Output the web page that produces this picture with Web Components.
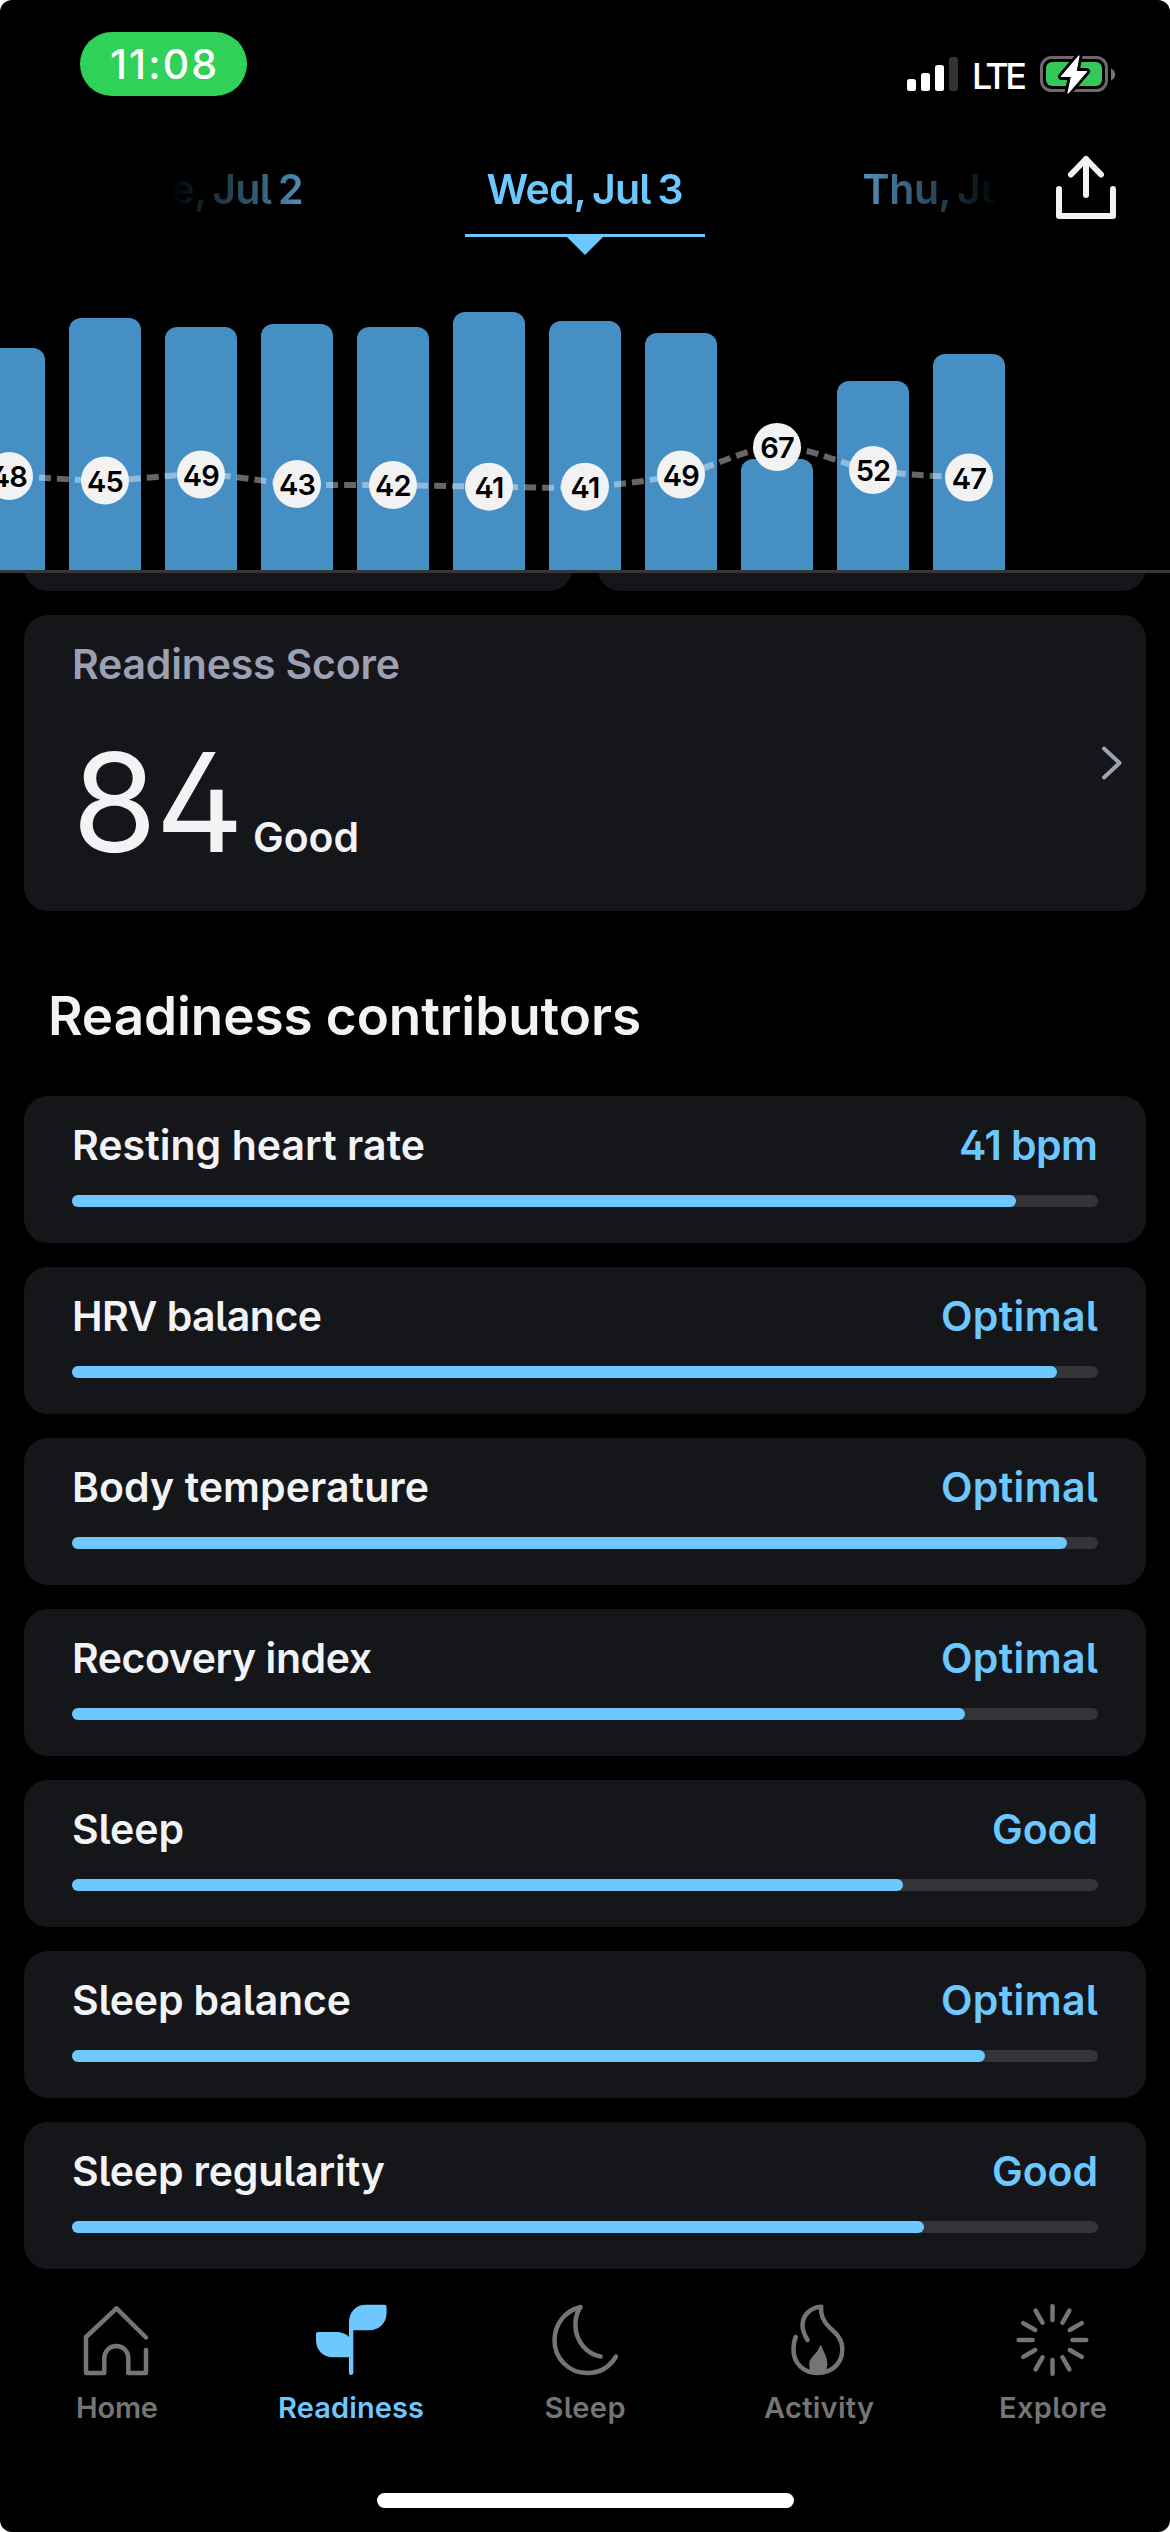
<!DOCTYPE html>
<html lang="en">
<head>
<meta charset="utf-8">
<title>Readiness</title>
<style>
  html, body {
    margin: 0;
    background: #fff;
  }

  body {
    --accent: #6dc8ff;
    --bar: #458fc5;
    --card: #15161a;
    --track: #333438;
    --text: #f2f3f5;
    --muted: #9d9fb3;
    --idle: #757575;
    font-family: Inter, "Liberation Sans", sans-serif;
    font-feature-settings: "cv02", "cv05";
    font-weight: 600;
    color: var(--text);
  }
</style>
</head>
<body>

<readiness-app>
  <status-bar slot="header" data-time="11:08" data-network="LTE"></status-bar>
  <date-strip slot="header">
    <date-tab data-width="181">Tue, Jul 2</date-tab>
    <date-tab data-width="197" selected>Wed, Jul 3</date-tab>
    <date-tab data-width="189">Thu, Jul 4</date-tab>
  </date-strip>
  <trend-chart slot="header"
               data-bars="222,252,243,246,243,258,249,237,111,189,216"
               data-values="48,45,49,43,42,41,41,49,67,52,47"
               data-points="476,480.5,474.5,484,485,486.7,486.7,474.5,447,470,477.5"></trend-chart>

  <card-stubs></card-stubs>
  <score-card data-score="84" data-rating="Good">Readiness Score</score-card>
  <section-title>Readiness contributors</section-title>
  <contributor-card data-width="353" data-value="41 bpm" data-value-width="139" data-fill="944">Resting heart rate</contributor-card>
  <contributor-card data-width="250" data-value="Optimal" data-value-width="157" data-fill="985">HRV balance</contributor-card>
  <contributor-card data-width="357" data-value="Optimal" data-value-width="157" data-fill="995">Body temperature</contributor-card>
  <contributor-card data-width="300" data-value="Optimal" data-value-width="157" data-fill="893">Recovery index</contributor-card>
  <contributor-card data-width="112" data-value="Good" data-value-width="106" data-fill="831">Sleep</contributor-card>
  <contributor-card data-width="279" data-value="Optimal" data-value-width="157" data-fill="913">Sleep balance</contributor-card>
  <contributor-card data-width="313" data-value="Good" data-value-width="106" data-fill="852">Sleep regularity</contributor-card>

  <tab-bar slot="footer">
    <tab-item data-icon="home" data-width="82">Home</tab-item>
    <tab-item data-icon="readiness" data-width="146" selected>Readiness</tab-item>
    <tab-item data-icon="sleep" data-width="81">Sleep</tab-item>
    <tab-item data-icon="activity" data-width="110">Activity</tab-item>
    <tab-item data-icon="explore" data-width="108">Explore</tab-item>
  </tab-bar>
</readiness-app>

<script>
// Attach an open shadow root and fill it
function render(host, css, html) {
  const shadow = host.attachShadow({ mode: "open" });
  shadow.innerHTML = `<style>${css}</style>${html}`;
  return shadow;
}

// <fit-text data-width="120">Label</fit-text>
// Tracks its text so that the label is data-width pixels wide
class FitText extends HTMLElement {
  connectedCallback() {
    const shadow = render(this, `
      :host { display: inline-block; white-space: nowrap; }
      span { display: inline-block; }
    `, `<span><slot></slot></span>`);

    const span = shadow.querySelector("span");
    const width = Number(this.dataset.width);
    const gaps = this.textContent.length - 1;
    if (width && gaps > 0) {
      const spacing = (width - span.getBoundingClientRect().width) / gaps;
      span.style.letterSpacing = `${spacing}px`;
      span.style.marginRight = `${-spacing}px`;
    }
  }
}

class ReadinessApp extends HTMLElement {
  constructor() {
    super();
    render(this, `
      :host {
        display: flex;
        flex-direction: column;
        width: 1170px;
        height: 2532px;
        background: #000;
        border-radius: 12px;
        overflow: hidden;
      }
      header { flex: none; }
      main {
        flex: none;
        height: 1696px;
        padding: 0 24px;
        display: flex;
        flex-direction: column;
        gap: 24px;
      }
      footer { flex: 1; }
    `, `
      <header><slot name="header"></slot></header>
      <main><slot></slot></main>
      <footer><slot name="footer"></slot></footer>
    `);
  }
}

class StatusBar extends HTMLElement {
  connectedCallback() {
    render(this, `
      :host {
        display: flex;
        justify-content: space-between;
        align-items: flex-start;
        height: 112px;
        padding: 32px 54px 0 80px;
        box-sizing: border-box;
        color: #fff;
        font-weight: 500;
        font-feature-settings: normal;
      }
      .time {
        width: 167px;
        height: 64px;
        line-height: 65px;
        border-radius: 32px;
        background: #30d158;
        text-align: center;
        font-size: 41px;
      }
      .right {
        display: flex;
        align-items: center;
        height: 84px;
      }
      .network {
        font-size: 36px;
        line-height: 40px;
        margin: 4px 13px 0 14px;
      }
      svg { display: block; }
    `, `
      <div class="time"><fit-text data-width="107">${this.dataset.time}</fit-text></div>
      <div class="right">
        <svg width="51" height="36" viewBox="0 0 51 36" fill="#fff">
          <rect x="0" y="23" width="9" height="12" rx="2.5"/>
          <rect x="14" y="17" width="9" height="18" rx="2.5"/>
          <rect x="28" y="9" width="9" height="26" rx="2.5"/>
          <rect x="42" y="1" width="9" height="34" rx="2.5" fill="#333"/>
        </svg>
        <div class="network"><fit-text data-width="55">${this.dataset.network}</fit-text></div>
        <svg width="76" height="40" viewBox="0 0 76 40">
          <rect x="1.5" y="3.5" width="65" height="33" rx="10" fill="none" stroke="#6d696d" stroke-width="3"/>
          <rect x="6" y="8" width="56" height="24" rx="6" fill="#34c759"/>
          <path d="M71 14.5 C76.5 17 76.5 24 71 26.5 Z" fill="#77737a"/>
          <path d="M39 2 L21.5 22.5 H31.5 L28 39 L46.5 17.5 H36 Z" fill="#fff" stroke="#000" stroke-width="7" stroke-linejoin="round" paint-order="stroke"/>
          <path d="M39 2 L21.5 22.5 H31.5 L28 39 L46.5 17.5 H36 Z" fill="#fff" stroke="#fff" stroke-width="1.2" stroke-linejoin="round"/>
        </svg>
      </div>
    `);
  }
}

class DateStrip extends HTMLElement {
  constructor() {
    super();
    render(this, `
      :host {
        display: flex;
        align-items: flex-start;
        height: 143px;
        padding-left: 170px;
        box-sizing: border-box;
      }
      .days {
        display: flex;
        justify-content: center;
        gap: 132px;
        width: 830px;
        padding-top: 52px;
        overflow: hidden;
        -webkit-mask-image: linear-gradient(90deg, transparent, #000 185px, #000 645px, transparent);
        mask-image: linear-gradient(90deg, transparent, #000 185px, #000 645px, transparent);
      }
      svg { margin: 41px 0 0 53px; }
    `, `
      <div class="days"><slot></slot></div>
      <svg width="66" height="69" viewBox="0 0 66 69" fill="none" stroke="#f2f3f5"
           stroke-width="6" stroke-linecap="round" stroke-linejoin="round">
        <path d="M6 36 V63 H60 V36"/>
        <path d="M33 42 V6 M18 21.5 L33 6 L48 21.5"/>
      </svg>
    `);
  }
}

class DateTab extends HTMLElement {
  connectedCallback() {
    render(this, `
      :host {
        flex: none;
        display: flex;
        flex-direction: column;
        align-items: center;
        width: 240px;
        color: var(--accent);
        font-size: 41px;
        line-height: 50px;
        word-spacing: -3px;
      }
      .marker {
        display: none;
        width: 240px;
        height: 21px;
        margin-top: 20px;
        background: var(--accent);
        clip-path: polygon(0 0, 100% 0, 100% 3px, 138px 3px, 120px 100%, 102px 3px, 0 3px);
      }
      :host([selected]) .marker { display: block; }
    `, `
      <fit-text data-width="${this.dataset.width}">${this.textContent}</fit-text>
      <div class="marker"></div>
    `);
  }
}

class TrendChart extends HTMLElement {
  connectedCallback() {
    const list = (name) => this.dataset[name].split(",").map(Number);
    const values = list("values");
    const top = 255;
    const points = list("points").map((y, i) => [9 + i * 96, y - top]);

    // Smooth line through the points
    let d = `M${points[0]}`;
    for (let i = 1; i < points.length; i++) {
      const [x0, y0] = points[i - 1];
      const [x1, y1] = points[i];
      const before = points[Math.max(i - 2, 0)];
      const after = points[Math.min(i + 1, points.length - 1)];
      d += ` C${x0 + 32} ${y0 + (y1 - before[1]) / 6} ${x1 - 32} ${y1 - (after[1] - y0) / 6} ${x1} ${y1}`;
    }

    const bars = list("bars").map((h) => `<div class="bar" style="height: ${h}px"></div>`).join("");
    const dots = points.map(([x, y], i) => `
      <circle cx="${x}" cy="${y}" r="24"/>
      <text x="${x}" y="${y + 11}">${values[i]}</text>`).join("");

    render(this, `
      :host {
        display: flex;
        align-items: flex-end;
        gap: 24px;
        height: 315px;
        border-bottom: 3px solid #37373b;
        position: relative;
        overflow: hidden;
      }
      .bar {
        flex: none;
        width: 72px;
        border-radius: 12px 12px 0 0;
        background: var(--bar);
      }
      .bar:first-of-type { margin-left: -27px; }
      svg { position: absolute; left: 0; top: 0; }
      .line {
        fill: none;
        stroke: rgba(255, 255, 255, 0.4);
        stroke-width: 6;
        stroke-dasharray: 12 6;
        stroke-dashoffset: -12;
      }
      circle { fill: #f2f2f3; }
      text { fill: #000; font-size: 29px; text-anchor: middle; letter-spacing: -0.8px; }
    `, `
      ${bars}
      <svg width="1170" height="315"><path class="line" d="${d}"/>${dots}</svg>
    `);
  }
}

// Lower edge of the two cards scrolled under the header
class CardStubs extends HTMLElement {
  constructor() {
    super();
    render(this, `
      :host { display: flex; gap: 24px; height: 18px; flex: none; overflow: hidden; }
      div {
        flex: 1;
        height: 80px;
        margin-top: -62px;
        border-radius: 24px;
        background: var(--card);
      }
    `, `<div></div><div></div>`);
  }
}

class ScoreCard extends HTMLElement {
  connectedCallback() {
    render(this, `
      :host {
        display: flex;
        align-items: center;
        justify-content: space-between;
        flex: none;
        height: 296px;
        padding: 24px 23px 59px 48px;
        box-sizing: border-box;
        border-radius: 24px;
        background: var(--card);
      }
      .title {
        color: var(--muted);
        font-size: 41px;
        line-height: 50px;
        margin-bottom: 63px;
      }
      .result { display: flex; align-items: baseline; gap: 9px; height: 100px; line-height: 100px; }
      .score { font-size: 137.5px; font-weight: 400; }
      .rating { font-size: 41px; }
      svg { margin-top: 35px; }
    `, `
      <div>
        <div class="title"><fit-text data-width="328">${this.textContent}</fit-text></div>
        <div class="result">
          <fit-text class="score" data-width="172">${this.dataset.score}</fit-text>
          <fit-text class="rating" data-width="106">${this.dataset.rating}</fit-text>
        </div>
      </div>
      <svg width="22" height="36" viewBox="0 0 22 36" fill="none" stroke="#a0a1b0"
           stroke-width="4" stroke-linecap="round" stroke-linejoin="round">
        <path d="M3 3.5 L18.5 18 L3 32.5"/>
      </svg>
    `);
  }
}

class SectionTitle extends HTMLElement {
  connectedCallback() {
    render(this, `
      :host { display: block; flex: none; padding: 49px 24px 24px; }
      h2 { margin: 0; font-size: 53px; line-height: 64px; font-weight: 600; }
    `, `<h2><fit-text data-width="593">${this.textContent}</fit-text></h2>`);
  }
}

class ContributorCard extends HTMLElement {
  connectedCallback() {
    render(this, `
      :host {
        display: block;
        flex: none;
        height: 147px;
        padding: 24px 48px 36px;
        box-sizing: border-box;
        border-radius: 24px;
        background: var(--card);
        font-size: 41px;
        line-height: 50px;
      }
      .row { display: flex; justify-content: space-between; height: 50px; }
      .value { color: var(--accent); }
      .track { margin-top: 25px; height: 12px; border-radius: 6px; background: var(--track); }
      .fill { height: 12px; border-radius: 6px; background: var(--accent); }
    `, `
      <div class="row">
        <fit-text data-width="${this.dataset.width}">${this.textContent}</fit-text>
        <fit-text class="value" data-width="${this.dataset.valueWidth}">${this.dataset.value}</fit-text>
      </div>
      <div class="track"><div class="fill" style="width: ${this.dataset.fill}px"></div></div>
    `);
  }
}

class TabBar extends HTMLElement {
  constructor() {
    super();
    render(this, `
      :host { display: flex; flex-direction: column; align-items: center; padding-top: 31px; }
      nav { display: flex; width: 100%; height: 193px; }
      .indicator { width: 417px; height: 15px; border-radius: 8px; background: #fff; }
    `, `<nav><slot></slot></nav><div class="indicator"></div>`);
  }
}

const rays = Array.from({ length: 12 }, (_, i) =>
  `<path d="M39.5 6.2 V20" transform="rotate(${i * 30} 39.5 40)"/>`).join("");

const icons = {
  home: `<path d="M69 37.5 L39.5 8.3 L9 37 V73 H27.3 V58 a12 12 0 0 1 24 0 V73 H69 V50"/>`,
  readiness: `
    <path fill="currentColor" stroke="none" d="M38 22 C38 12 45 4.7 55 4.7 H73.5 Q75.6 4.7 75.6 6.8 V13 C75.6 23 68 30.3 58 30.3 H42.3 V73 Q42 75 40.1 75 Q38 75 38 73 V57.3 H22 C12 57.3 5 50 5 40 V34 Q5 32 7 32 H25 C30 32 35 33.5 38 37 Z"/>`,
  sleep: `<path d="M71 56.5 C64.5 67.5 54 73 42 73 C24 73 9.5 58.5 9.5 40.5 C9.5 24 20 11 35.5 7 C31.5 13 30 20 30.5 27 C31.5 42 42 54 55.5 56.5"/>`,
  activity: `
    <path d="M28.5 40 C25.5 35 23.5 31 23.5 25.5 C23.5 15.5 31 7.5 42.2 6.8 C41 15 44.5 21.5 51 28 C58 34.5 63.3 39 63.3 49.5 C63.3 63 53 73 38.8 73 C25 73 14.5 63.5 14.5 50 C14.5 45 15 41 16.8 37"/>
    <path fill="currentColor" stroke="none" d="M41 45.3 Q42 45 42.6 46.5 C44.5 52 48.5 57 48.3 64.5 Q48 70 46 74 H32.5 Q30 69.5 30.2 63.5 C30.5 57 38.5 54.5 41 45.3 Z"/>`,
  explore: rays,
};

class TabItem extends HTMLElement {
  connectedCallback() {
    render(this, `
      :host {
        flex: 1;
        display: flex;
        flex-direction: column;
        align-items: center;
        color: var(--idle);
        font-size: 29px;
        line-height: 36px;
      }
      :host([selected]) { color: var(--accent); }
      svg { display: block; margin-bottom: 10px; }
    `, `
      <svg width="80" height="80" viewBox="0 0 80 80" fill="none" stroke="currentColor"
           stroke-width="4.5" stroke-linecap="round" stroke-linejoin="round">${icons[this.dataset.icon]}</svg>
      <fit-text data-width="${this.dataset.width}">${this.textContent}</fit-text>
    `);
  }
}

customElements.define("fit-text", FitText);
customElements.define("readiness-app", ReadinessApp);
customElements.define("status-bar", StatusBar);
customElements.define("date-strip", DateStrip);
customElements.define("date-tab", DateTab);
customElements.define("trend-chart", TrendChart);
customElements.define("card-stubs", CardStubs);
customElements.define("score-card", ScoreCard);
customElements.define("section-title", SectionTitle);
customElements.define("contributor-card", ContributorCard);
customElements.define("tab-bar", TabBar);
customElements.define("tab-item", TabItem);
</script>
</body>
</html>
